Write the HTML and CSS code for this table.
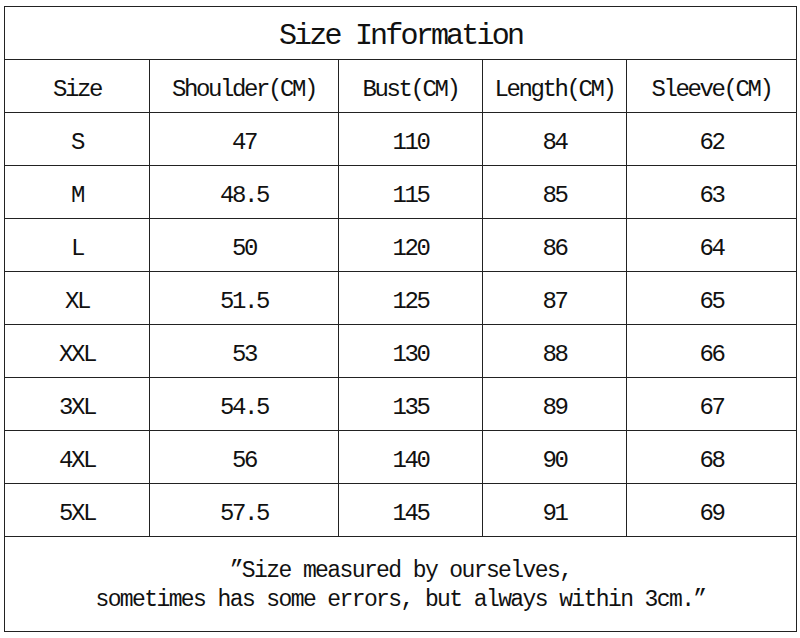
FILE: index.html
```html
<!DOCTYPE html>
<html lang="en">
<head>
    <meta charset="UTF-8">
    <meta name="viewport" content="width=device-width, initial-scale=1.0">
    <title>Size Information</title>
    <link rel="stylesheet" href="styles.css">
</head>
<body>
    <table class="size-table">
        <colgroup>
            <col class="col-size">
            <col class="col-shoulder">
            <col class="col-bust">
            <col class="col-length">
            <col class="col-sleeve">
        </colgroup>
        <thead>
            <tr class="title-row">
                <th colspan="5">Size Information</th>
            </tr>
            <tr class="head-row">
                <th>Size</th>
                <th>Shoulder(CM)</th>
                <th>Bust(CM)</th>
                <th>Length(CM)</th>
                <th>Sleeve(CM)</th>
            </tr>
        </thead>
        <tbody>
            <tr><td>S</td><td>47</td><td>110</td><td>84</td><td>62</td></tr>
            <tr><td>M</td><td>48.5</td><td>115</td><td>85</td><td>63</td></tr>
            <tr><td>L</td><td>50</td><td>120</td><td>86</td><td>64</td></tr>
            <tr><td>XL</td><td>51.5</td><td>125</td><td>87</td><td>65</td></tr>
            <tr><td>XXL</td><td>53</td><td>130</td><td>88</td><td>66</td></tr>
            <tr><td>3XL</td><td>54.5</td><td>135</td><td>89</td><td>67</td></tr>
            <tr><td>4XL</td><td>56</td><td>140</td><td>90</td><td>68</td></tr>
            <tr><td>5XL</td><td>57.5</td><td>145</td><td>91</td><td>69</td></tr>
        </tbody>
        <tfoot>
            <tr class="note-row">
                <td colspan="5">”Size measured by ourselves,<br>sometimes has some errors, but always within 3cm.”</td>
            </tr>
        </tfoot>
    </table>
</body>
</html>
```

FILE: styles.css
```css
body {
    margin: 0;
    background: #fff;
    color: #111;
    font-family: "Liberation Mono", "DejaVu Sans Mono", monospace;
}
.size-table {
    table-layout: fixed;
    border-collapse: collapse;
    width: 792px;
    margin: 6px 0 0 4px;
}
.col-size { width: 145px; }
.col-shoulder { width: 189px; }
.col-bust { width: 144px; }
.col-length { width: 144px; }
.col-sleeve { width: 170px; }
th, td {
    border: 1px solid #222;
    padding: 7px 0 0;
    text-align: center;
    font-weight: normal;
    font-size: 24px;
    letter-spacing: -2.4px;
    height: 53px;
    box-sizing: border-box;
}
.title-row th {
    font-size: 30px;
    letter-spacing: -2.8px;
    padding-top: 5px;
}
.note-row td {
    height: 95px;
    padding-top: 4px;
    line-height: 29px;
    font-size: 23px;
    letter-spacing: -1.6px;
}
```
